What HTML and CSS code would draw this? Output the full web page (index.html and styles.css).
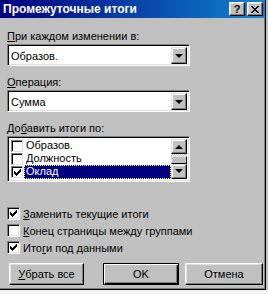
FILE: index.html
```html
<!DOCTYPE html>
<html lang="ru">

<head>
  <meta charset="UTF-8">
  <meta name="viewport" content="width=device-width, initial-scale=1.0">
  <title>Промежуточные итоги</title>
  <link rel="stylesheet" href="styles.css">
</head>

<body>
  <div class="window">
    <div class="titlebar">
      <span class="title">Промежуточные итоги</span>
      <div class="title-btns">
        <span class="tbtn help">?</span>
        <span class="tbtn close">
          <svg width="8" height="7" viewBox="0 0 8 7">
            <path d="M0 0h2v1h-2zM6 0h2v1h-2zM1 1h2v1h-2zM5 1h2v1h-2zM2 2h4v1h-4zM3 3h2v1h-2zM2 4h4v1h-4zM1 5h2v1h-2zM5 5h2v1h-2zM0 6h2v1h-2zM6 6h2v1h-2z" fill="#000" />
          </svg>
        </span>
      </div>
    </div>

    <div class="content">
      <div class="label"><u>П</u>ри каждом изменении в:</div>
      <div class="combo">
        <span class="combo-text">Образов.</span>
        <span class="drop-btn"><span class="arrow-down"></span></span>
      </div>

      <div class="label gap"><u>О</u>перация:</div>
      <div class="combo">
        <span class="combo-text">Сумма</span>
        <span class="drop-btn"><span class="arrow-down"></span></span>
      </div>

      <div class="label gap">До<u>б</u>авить итоги по:</div>
      <div class="listbox">
        <div class="items">
          <div class="item">
            <span class="lcheck"></span>
            <span class="item-text">Образов.</span>
          </div>
          <div class="item">
            <span class="lcheck"></span>
            <span class="item-text">Должность</span>
          </div>
          <div class="item">
            <span class="lcheck">
              <svg width="7" height="7" viewBox="0 0 7 7">
                <path d="M6 0h1v3h-1v1h-1v1h-1v1h-1v1h-1v-1h-1v-1h-1v-3h1v1h1v1h1v-1h1v-1h1z" fill="#000" />
              </svg>
            </span>
            <span class="item-text selected">Оклад</span>
          </div>
        </div>
        <div class="scrollbar">
          <span class="sbtn"><span class="arrow-up"></span></span>
          <span class="track"><span class="thumb"></span></span>
          <span class="sbtn"><span class="arrow-down"></span></span>
        </div>
      </div>

      <div class="checks">
        <div class="check-row">
          <span class="check">
            <svg width="7" height="7" viewBox="0 0 7 7">
              <path d="M6 0h1v3h-1v1h-1v1h-1v1h-1v1h-1v-1h-1v-1h-1v-3h1v1h1v1h1v-1h1v-1h1z" fill="#000" />
            </svg>
          </span>
          <span><u>З</u>аменить текущие итоги</span>
        </div>
        <div class="check-row">
          <span class="check"></span>
          <span><u>К</u>онец страницы между группами</span>
        </div>
        <div class="check-row">
          <span class="check">
            <svg width="7" height="7" viewBox="0 0 7 7">
              <path d="M6 0h1v3h-1v1h-1v1h-1v1h-1v1h-1v-1h-1v-1h-1v-3h1v1h1v1h1v-1h1v-1h1z" fill="#000" />
            </svg>
          </span>
          <span>Ито<u>г</u>и под данными</span>
        </div>
      </div>

      <div class="buttons">
        <span class="btn remove"><u>У</u>брать все</span>
        <span class="btn default">OK</span>
        <span class="btn cancel">Отмена</span>
      </div>
    </div>
  </div>
  <div class="below"></div>
</body>

</html>
```

FILE: styles.css
```css
* {
  box-sizing: border-box;
}

body {
  margin: 0;
  background: #c0c0c0;
  font-family: "Liberation Sans", Arial, sans-serif;
  font-size: 11px;
  color: #000;
}

.window {
  width: 266px;
  height: 290px;
  background: #c0c0c0;
  border-right: 1px solid #000;
  border-bottom: 1px solid #000;
  box-shadow: inset -1px -1px 0 #808080;
}

.below {
  height: 4px;
  width: 268px;
  background: #f4f4f4;
}

/* title bar */
.titlebar {
  height: 18px;
  width: 265px;
  display: flex;
  align-items: center;
  justify-content: space-between;
  padding: 0 2px 0 3px;
  background: linear-gradient(to right, #000080, #1084d0);
}

.title {
  color: #fff;
  font-weight: bold;
  font-size: 12px;
  line-height: 18px;
}

.title-btns {
  display: flex;
  gap: 2px;
}

.tbtn {
  width: 16px;
  height: 14px;
  display: flex;
  align-items: center;
  justify-content: center;
  background: #c0c0c0;
  border: 1px solid;
  border-color: #fff #000 #000 #fff;
  box-shadow: inset -1px -1px 0 #808080, inset 1px 1px 0 #dfdfdf;
}

.help {
  font-weight: bold;
  font-size: 11px;
  line-height: 12px;
}

/* dialog content */
.content {
  padding: 11px 0 0 7px;
}

.label {
  line-height: 14px;
  white-space: nowrap;
}

.label.gap {
  margin-top: 9px;
}

.combo {
  margin-top: 1px;
  width: 183px;
  height: 22px;
  display: flex;
  background: #fff;
  border: 1px solid;
  border-color: #808080 #fff #fff #808080;
  box-shadow: inset 1px 1px 0 #000, inset -1px -1px 0 #dfdfdf;
  padding: 2px 2px 2px 2px;
}

.combo-text {
  flex: 1;
  line-height: 18px;
  padding-left: 1px;
}

.drop-btn,
.sbtn {
  width: 16px;
  height: 17px;
  display: flex;
  align-items: center;
  justify-content: center;
  background: #c0c0c0;
  border: 1px solid;
  border-color: #dfdfdf #000 #000 #dfdfdf;
  box-shadow: inset -1px -1px 0 #808080, inset 1px 1px 0 #fff;
}

.arrow-down {
  width: 0;
  height: 0;
  border-left: 4px solid transparent;
  border-right: 4px solid transparent;
  border-top: 4px solid #000;
}

.arrow-up {
  width: 0;
  height: 0;
  border-left: 4px solid transparent;
  border-right: 4px solid transparent;
  border-bottom: 4px solid #000;
}

/* list with checkboxes */
.listbox {
  margin-top: 1px;
  width: 183px;
  height: 46px;
  display: flex;
  background: #fff;
  border: 1px solid;
  border-color: #808080 #fff #fff #808080;
  box-shadow: inset 1px 1px 0 #000, inset -1px -1px 0 #dfdfdf;
  padding: 2px;
}

.items {
  flex: 1;
  display: flex;
  flex-direction: column;
}

.item {
  height: 14px;
  display: flex;
  align-items: center;
}

.lcheck {
  width: 12px;
  height: 12px;
  margin-left: 1px;
  display: flex;
  align-items: center;
  justify-content: center;
  background: #fff;
  border: 1px solid;
  border-color: #808080 #dfdfdf #dfdfdf #808080;
  box-shadow: inset 1px 1px 0 #000;
}

.item-text {
  margin-left: 1px;
  padding: 0 2px;
  line-height: 13px;
}

.item-text.selected {
  flex: 1;
  height: 14px;
  background: #000080;
  color: #fff;
  outline: 1px dotted #ffff60;
  outline-offset: -1px;
}

.scrollbar {
  width: 16px;
  display: flex;
  flex-direction: column;
}

.sbtn {
  height: 16px;
}

.track {
  height: 10px;
  display: flex;
  align-items: flex-end;
  background: repeating-conic-gradient(#c0c0c0 0 25%, #fff 0 50%) 0 0 / 2px 2px;
}

.thumb {
  width: 16px;
  height: 8px;
  background: #c0c0c0;
  border: 1px solid;
  border-color: #dfdfdf #000 #000 #dfdfdf;
}

/* option checkboxes */
.checks {
  margin-top: 23px;
}

.check-row {
  height: 17px;
  display: flex;
  align-items: center;
  gap: 3px;
  white-space: nowrap;
}

.check {
  width: 13px;
  height: 13px;
  display: flex;
  align-items: center;
  justify-content: center;
  background: #fff;
  border: 1px solid;
  border-color: #808080 #fff #fff #808080;
  box-shadow: inset 1px 1px 0 #000, inset -1px -1px 0 #dfdfdf;
}

/* buttons */
.buttons {
  margin-top: 7px;
  display: flex;
}

.btn {
  height: 22px;
  display: flex;
  align-items: center;
  justify-content: center;
  background: #c0c0c0;
  border: 1px solid;
  border-color: #fff #000 #000 #fff;
  box-shadow: inset -1px -1px 0 #808080, inset 1px 1px 0 #dfdfdf;
}

.btn.remove {
  width: 75px;
  margin-left: 2px;
}

.btn.default {
  width: 76px;
  margin-left: 19px;
  border: 1px solid #000;
  box-shadow: inset 1px 1px 0 #fff, inset -1px -1px 0 #000, inset -2px -2px 0 #808080;
}

.btn.cancel {
  width: 78px;
  margin-left: 6px;
}
```
